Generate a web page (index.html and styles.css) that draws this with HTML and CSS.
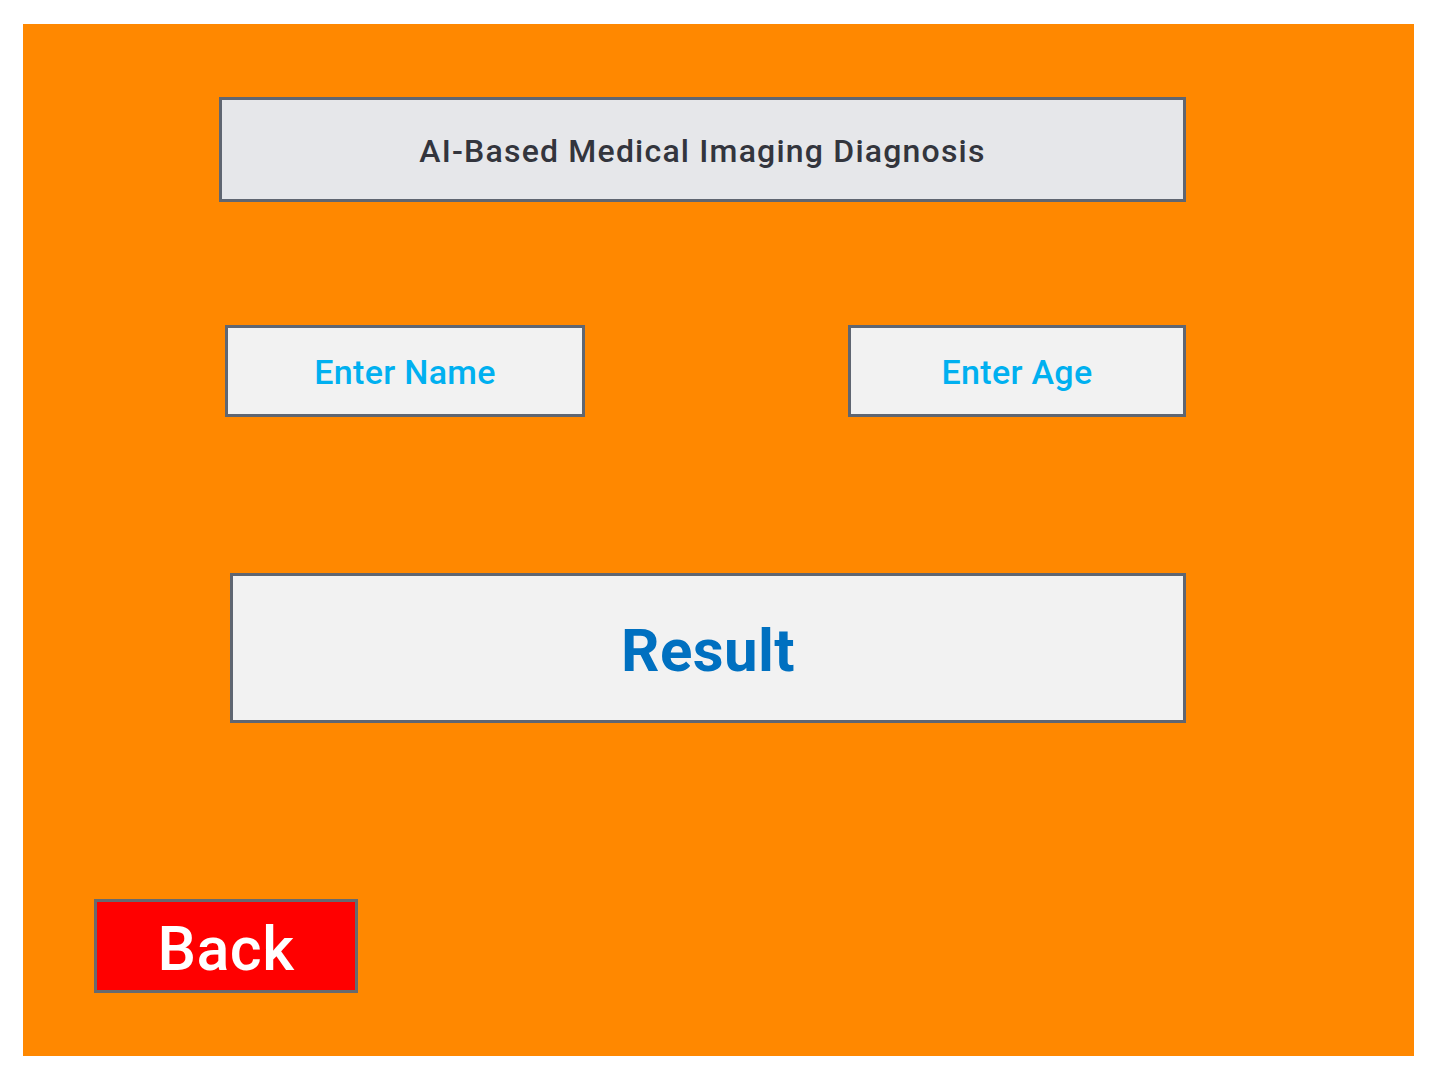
FILE: index.html
```html
<!DOCTYPE html>
<html lang="en">
<head>
<meta charset="utf-8">
<title>AI-Based Medical Imaging Diagnosis</title>
<link rel="stylesheet" href="styles.css">
</head>
<body>
<main class="panel">
  <div class="title-box">AI-Based Medical Imaging Diagnosis</div>
  <div class="input-row">
    <div class="field field-name">Enter Name</div>
    <div class="field field-age">Enter Age</div>
  </div>
  <div class="result-box">Result</div>
  <button class="back-btn" type="button">Back</button>
</main>
</body>
</html>
```
FILE: styles.css
```css
* { box-sizing: border-box; }
html, body { margin: 0; padding: 0; background: #ffffff; }
body {
  width: 1435px;
  height: 1080px;
  padding: 24px 21px 24px 23px;
  font-family: Roboto, "Liberation Sans", sans-serif;
}
.panel {
  width: 1391px;
  height: 1032px;
  background: #ff8800;
  display: flex;
  flex-direction: column;
  align-items: flex-start;
  padding-top: 73px;
}
.title-box {
  margin-left: 196px;
  width: 967px;
  height: 105px;
  background: #e6e7ea;
  border: 3px solid #5f6672;
  display: flex;
  align-items: center;
  justify-content: center;
  color: #33353d;
  font-size: 32px;
  font-weight: 500;
  letter-spacing: 1.2px;
  padding-top: 3px;
}
.input-row {
  margin-top: 123px;
  margin-left: 202px;
  width: 961px;
  display: flex;
  justify-content: space-between;
}
.field {
  height: 92px;
  background: #f2f2f2;
  border: 3px solid #5f6672;
  display: flex;
  align-items: center;
  justify-content: center;
  color: #00b0f0;
  font-size: 34px;
  font-weight: 500;
  letter-spacing: 0.3px;
  padding-top: 2px;
}
.field-name { width: 360px; }
.field-age { width: 338px; }
.result-box {
  margin-top: 156px;
  margin-left: 207px;
  width: 956px;
  height: 150px;
  background: #f2f2f2;
  border: 3px solid #5f6672;
  display: flex;
  align-items: center;
  justify-content: center;
  color: #0070c0;
  font-size: 60px;
  font-weight: 700;
  letter-spacing: 0.4px;
  padding-top: 5px;
}
.back-btn {
  margin-top: 176px;
  margin-left: 71px;
  width: 264px;
  height: 94px;
  background: #ff0000;
  border: 3px solid #666a70;
  border-radius: 0;
  color: #ffffff;
  font-family: Roboto, "Liberation Sans", sans-serif;
  font-size: 61px;
  font-weight: 500;
  letter-spacing: 0.5px;
  padding: 6px 0 0 0;
  display: flex;
  align-items: center;
  justify-content: center;
}
```
